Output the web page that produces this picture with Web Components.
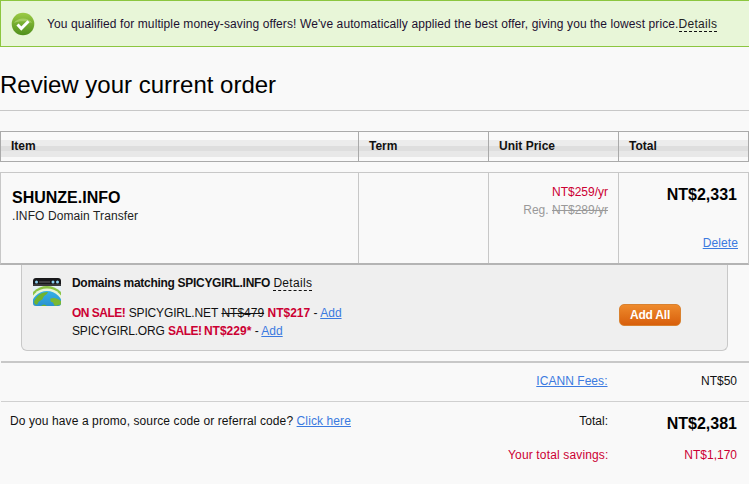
<!DOCTYPE html>
<html>
<head>
<meta charset="utf-8">
<title>Review your current order</title>
<style>
html, body { margin: 0; background: #f9f9f9; }
body { font: 12px "Liberation Sans", Arial, sans-serif; color: #111; width: 749px; height: 484px; overflow: hidden; }
</style>
</head>
<body>
<offer-banner>You qualified for multiple money-saving offers! We've automatically applied the best offer, giving you the lowest price.</offer-banner>
<page-title>Review your current order</page-title>
<cart-head></cart-head>
<cart-item name="SHUNZE.INFO" desc=".INFO Domain Transfer" price="NT$259/yr" reg="NT$289/yr" total="NT$2,331"></cart-item>
<cross-sell></cross-sell>
<order-summary></order-summary>

<script>
const LINK = "#3b7ae0";
const RED = "#cc0033";

class OfferBanner extends HTMLElement {
  constructor() {
    super();
    this.attachShadow({ mode: "open" });
    this.shadowRoot.innerHTML = `
    <style>
      :host { display: flex; align-items: center; box-sizing: border-box; height: 47px; background: #e8f6d8; border: solid #8cc63f; border-width: 1px 0 1px 1px; padding: 0 0 0 10px; color: #1c1030; }
      svg { flex: none; margin-right: 12px; }
      .txt { letter-spacing: 0.1px; white-space: nowrap; }
      .tip { border-bottom: 1px dashed #111; color: #222; letter-spacing: 0.3px; }
    </style>
    <svg width="24" height="24" viewBox="0 0 24 24">
      <defs><linearGradient id="g" x1="0" y1="0" x2="0" y2="1"><stop offset="0" stop-color="#9ccb45"/><stop offset="1" stop-color="#4f8f1c"/></linearGradient></defs>
      <circle cx="12" cy="12" r="11.3" fill="url(#g)"/>
      <path d="M3 11C6 5 18 5 21 11C16 8.500 8 8.500 3 11Z" fill="#b9dc7c" opacity=".6"/>
      <path d="M6.500 12.500L10.300 16.500L17.500 9.300" fill="none" stroke="#fff" stroke-width="3"/>
    </svg>
    <span class="txt"><slot></slot><span class="tip">Details</span></span>`;
  }
}

class PageTitle extends HTMLElement {
  constructor() {
    super();
    this.attachShadow({ mode: "open" });
    this.shadowRoot.innerHTML = `
    <style>
      :host { display: block; box-sizing: border-box; height: 64px; padding-top: 24px; border-bottom: 1px solid #c8c8c8; font-size: 24px; line-height: 28px; color: #000; }
    </style>
    <slot></slot>`;
  }
}

class CartHead extends HTMLElement {
  constructor() {
    super();
    this.attachShadow({ mode: "open" });
    this.shadowRoot.innerHTML = `
    <style>
      :host { display: grid; grid-template-columns: 357px 130px 130px 130px; box-sizing: border-box; width: 749px; height: 31px; margin-top: 20px; border: 1px solid #aaa; font-weight: bold; color: #111;
        background: linear-gradient(#f9f9f9 0, #f9f9f9 8px, #ececec 8px, #ececec 14px, #dedede 14px, #dedede 19px, #e8e8e8 19px, #e8e8e8 25px, #f9f9f9 25px); }
      div { padding: 7px 0 0 10px; line-height: 14px; border-left: 1px solid #aaa; }
      div:first-of-type { border-left: 0; }
    </style>
    <div>Item</div><div>Term</div><div>Unit Price</div><div>Total</div>`;
  }
}

class CartItem extends HTMLElement {
  connectedCallback() {
    const a = (n) => this.getAttribute(n);
    this.attachShadow({ mode: "open" });
    this.shadowRoot.innerHTML = `
    <style>
      :host { display: grid; grid-template-columns: 357px 130px 130px 130px; box-sizing: border-box; width: 749px; height: 93px; margin-top: 10px; border: 1px solid #c8c8c8; border-bottom: 2px solid #b4b4b4; }
      .c { border-left: 1px solid #c8c8c8; box-sizing: border-box; }
      .c:first-of-type { border-left: 0; padding: 16px 0 0 11px; }
      .name { font-size: 16px; font-weight: bold; line-height: 17px; color: #000; }
      .desc { line-height: 17px; margin-top: 2px; color: #222; letter-spacing: 0.1px; }
      .price { text-align: right; padding: 10px 10px 0 0; line-height: 18px; color: ${RED}; }
      .reg { color: #999; }
      .total { display: flex; flex-direction: column; text-align: right; padding: 12px 10px 0 0; }
      .amt { font-size: 16px; font-weight: bold; line-height: 19px; color: #000; margin-right: 1px; }
      a { color: ${LINK}; text-decoration: underline; margin-top: 32px; line-height: 14px; letter-spacing: 0.1px; }
    </style>
    <div class="c"><div class="name">${a("name")}</div><div class="desc">${a("desc")}</div></div>
    <div class="c"></div>
    <div class="c price"><div>${a("price")}</div><div class="reg">Reg. <s>${a("reg")}</s></div></div>
    <div class="c total"><span class="amt">${a("total")}</span><a>Delete</a></div>`;
  }
}

class CrossSell extends HTMLElement {
  constructor() {
    super();
    this.attachShadow({ mode: "open" });
    this.shadowRoot.innerHTML = `
    <style>
      :host { display: flex; box-sizing: border-box; width: 707px; height: 86px; margin-left: 21px; padding: 10px 0 0 11px; background: #efefef; border: 1px solid #c8c8c8; border-top: 0; border-radius: 0 0 6px 6px; color: #111; }
      svg { flex: none; margin: 3px 11px 0 0; }
      .head { line-height: 17px; }
      b.t { font-weight: bold; color: #111; letter-spacing: -0.3px; }
      .tip { border-bottom: 1px dashed #111; letter-spacing: 0.3px; }
      .rows { margin-top: 12px; line-height: 18px; }
      .dom { letter-spacing: -0.15px; }
      .sale { color: ${RED}; font-weight: bold; }
      .word { letter-spacing: -0.5px; }
      .tight { margin-left: -1px; }
      a { color: ${LINK}; text-decoration: underline; }
      .info { flex: 1; }
      .add { flex: none; align-self: flex-start; box-sizing: border-box; width: 62px; height: 22px; margin: 29px 46px 0 0; border: 1px solid #d9812f; border-radius: 5px; background: linear-gradient(#ee8a2c, #d85f0c); color: #fff; font: bold 12px/20px "Liberation Sans", Arial, sans-serif; letter-spacing: -0.2px; text-align: center; }
    </style>
    <svg width="28" height="28" viewBox="0 0 28 28">
      <defs>
        <clipPath id="w"><rect width="28" height="28" rx="3"/></clipPath>
        <linearGradient id="sea" x1="0" y1="0" x2="0" y2="1"><stop offset="0" stop-color="#35b0e8"/><stop offset="1" stop-color="#1c70b4"/></linearGradient>
      </defs>
      <g clip-path="url(#w)">
        <rect width="28" height="28" fill="#e4f1f6"/>
        <circle cx="14" cy="27" r="19" fill="#8cc444"/>
        <circle cx="14" cy="28" r="17.500" fill="#e9f5da"/>
        <circle cx="14" cy="29" r="16" fill="url(#sea)"/>
        <path d="M1 24C3 18 8 14 15 14C14 17 11 17 10 20C9 23 6 22 5 25C4 28 2 27 1 24Z" fill="#6fb32f"/>
        <path d="M17 21C20 19 24 20 28 23V27C25 26 24 28 22 28C20 26 21 24 18 24Z" fill="#7ab833"/>
        <path d="M8 28C10 26 12 26 14 28Z" fill="#6fb32f"/>
        <rect width="28" height="8" fill="#18181a"/>
        <rect y="6" width="28" height="2" fill="#3a3a3c"/>
        <path d="M6 4H17" stroke="#666" stroke-width="1"/>
        <circle cx="3.500" cy="4" r="1.500" fill="#8cd0f0"/><circle cx="20" cy="4" r="1.500" fill="#8cd0f0"/><circle cx="24.500" cy="4" r="1.500" fill="#8cd0f0"/>
      </g>
    </svg>
    <div class="info">
      <div class="head"><b class="t">Domains matching SPICYGIRL.INFO</b> <span class="tip">Details</span></div>
      <div class="rows">
        <div><span class="sale word">ON SALE!</span> <span class="dom">SPICYGIRL.NET</span> <s>NT$479</s> <span class="sale">NT$217</span> - <a>Add</a></div>
        <div><span class="dom">SPICYGIRL.ORG</span> <span class="sale word">SALE!</span> <span class="sale tight">NT$229*</span> - <a>Add</a></div>
      </div>
    </div>
    <div class="add">Add All</div>`;
  }
}

class OrderSummary extends HTMLElement {
  constructor() {
    super();
    this.attachShadow({ mode: "open" });
    this.shadowRoot.innerHTML = `
    <style>
      :host { display: block; margin-top: 10px; color: #111; }
      .fees { display: flex; justify-content: flex-end; box-sizing: border-box; height: 41px; border-top: 2px solid #c8c8c8; border-bottom: 1px solid #d0d0d0; margin-left: 1px; padding-top: 11px; line-height: 14px; }
      .l { width: 609px; text-align: right; letter-spacing: 0.05px; }
      .v { width: 130px; text-align: right; margin-right: 12px; }
      a { color: ${LINK}; text-decoration: underline; }
      .grid { display: grid; grid-template-columns: 1fr 130px 141px; padding-top: 12px; }
      .grid > div { text-align: right; line-height: 14px; }
      .grid > .promo { text-align: left; padding-left: 10px; letter-spacing: 0.1px; }
      .grid > .v2 { padding-right: 12px; font-size: 16px; font-weight: bold; line-height: 20px; color: #000; }
      .grid > .sv { color: ${RED}; margin-top: 14px; letter-spacing: 0.15px; }
      .grid > .sv.l2 { margin-right: -0.5px; }
      .grid > .sv.r { padding-right: 12px; letter-spacing: 0; }
    </style>
    <div class="fees"><span class="l"><a>ICANN Fees:</a></span><span class="v">NT$50</span></div>
    <div class="grid">
      <div class="promo">Do you have a promo, source code or referral code? <a>Click here</a></div>
      <div>Total:</div>
      <div class="v2">NT$2,381</div>
      <div class="sv l2" style="grid-column: 1 / 3">Your total savings:</div>
      <div class="sv r">NT$1,170</div>
    </div>`;
  }
}

customElements.define("offer-banner", OfferBanner);
customElements.define("page-title", PageTitle);
customElements.define("cart-head", CartHead);
customElements.define("cart-item", CartItem);
customElements.define("cross-sell", CrossSell);
customElements.define("order-summary", OrderSummary);
</script>
</body>
</html>
